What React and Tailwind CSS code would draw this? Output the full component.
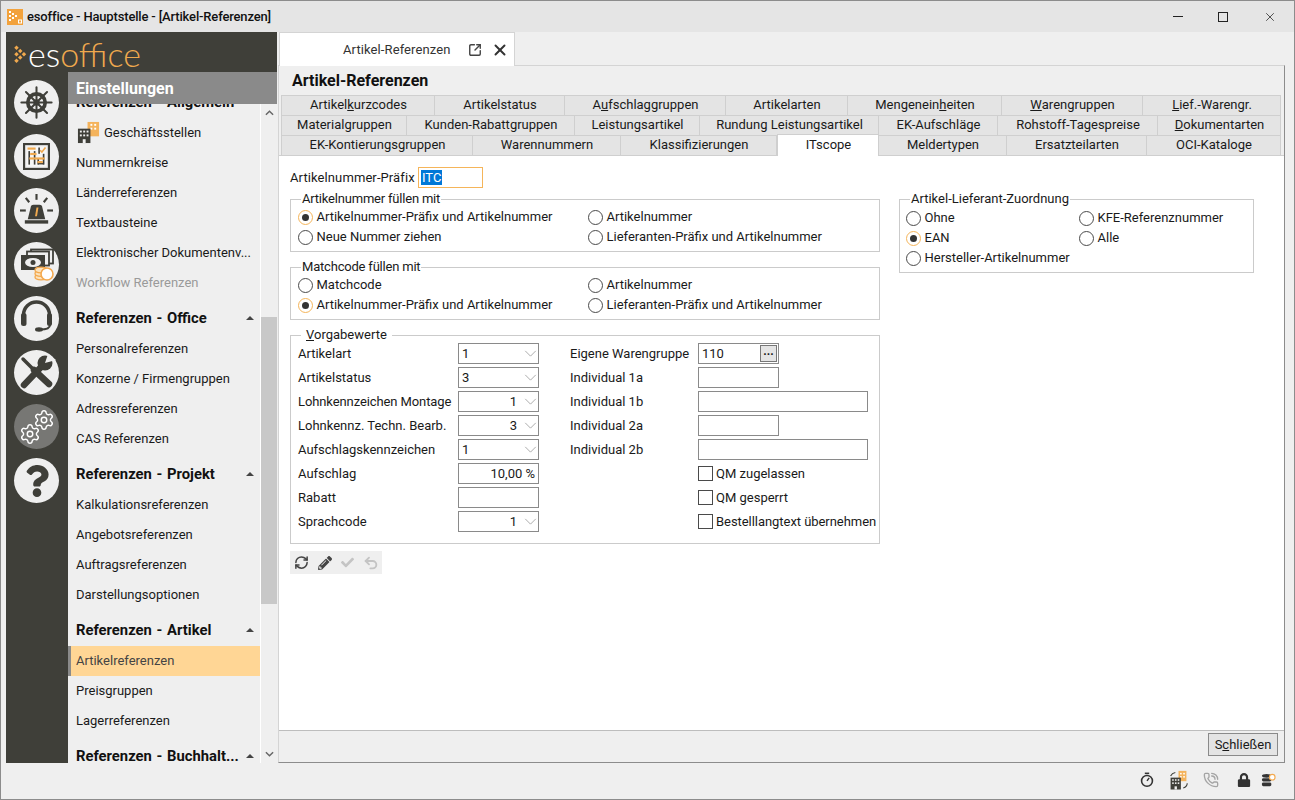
import React from "react";
import { X, Settings, RefreshCw, Undo2, PhoneCall, SquareArrowOutUpRight } from "lucide-react";
import { FaQuestion, FaPencilAlt, FaCheck, FaLock } from "react-icons/fa";

const DARK = "#3f3f39";

const tabRows = [
  [
    { w: 154, label: <>Artikel<u>k</u>urzcodes</> },
    { w: 130, label: "Artikelstatus" },
    { w: 161, label: <>A<u>u</u>fschlaggruppen</> },
    { w: 122, label: "Artikelarten" },
    { w: 154, label: <>Mengenein<u>h</u>eiten</> },
    { w: 141, label: <><u>W</u>arengruppen</> },
    { w: 138, label: <><u>L</u>ief.-Warengr.</> },
  ],
  [
    { w: 126, label: "Materialgruppen" },
    { w: 168, label: "Kunden-Rabattgruppen" },
    { w: 125, label: "Leistungsartikel" },
    { w: 179, label: "Rundung Leistungsartikel" },
    { w: 119, label: "EK-Aufschläge" },
    { w: 160, label: "Rohstoff-Tagespreise" },
    { w: 123, label: <><u>D</u>okumentarten</> },
  ],
  [
    { w: 192, label: "EK-Kontierungsgruppen" },
    { w: 148, label: "Warennummern" },
    { w: 156, label: "Klassifizierungen" },
    { w: 102, label: "ITscope", active: true },
    { w: 128, label: "Meldertypen" },
    { w: 140, label: "Ersatzteilarten" },
    { w: 134, label: "OCI-Kataloge" },
  ],
];

const menu = [
  { head: "Referenzen - Allgemein" },
  { label: "Geschäftsstellen", icon: true },
  { label: "Nummernkreise" },
  { label: "Länderreferenzen" },
  { label: "Textbausteine" },
  { label: "Elektronischer Dokumentenv..." },
  { label: "Workflow Referenzen", disabled: true },
  { head: "Referenzen - Office" },
  { label: "Personalreferenzen" },
  { label: "Konzerne / Firmengruppen" },
  { label: "Adressreferenzen" },
  { label: "CAS Referenzen" },
  { head: "Referenzen - Projekt" },
  { label: "Kalkulationsreferenzen" },
  { label: "Angebotsreferenzen" },
  { label: "Auftragsreferenzen" },
  { label: "Darstellungsoptionen" },
  { head: "Referenzen - Artikel" },
  { label: "Artikelreferenzen", active: true },
  { label: "Preisgruppen" },
  { label: "Lagerreferenzen" },
  { head: "Referenzen - Buchhalt..." },
];

const BuildingIcon = ({ className }) => (
  <svg viewBox="0 0 24 24" className={className}>
    <rect x="11" y="1" width="12" height="15" fill="#f4b35c" />
    <g fill="#fff">
      <rect x="14" y="3" width="2" height="2" />
      <rect x="18" y="3" width="2" height="2" />
      <rect x="14" y="7" width="2" height="2" />
      <rect x="18" y="7" width="2" height="2" />
    </g>
    <rect x="1" y="8" width="13" height="15" fill={DARK} />
    <g fill="#efefef">
      <rect x="3" y="10" width="2" height="2" />
      <rect x="6.5" y="10" width="2" height="2" />
      <rect x="10" y="10" width="2" height="2" />
      <rect x="3" y="14" width="2" height="2" />
      <rect x="6.5" y="14" width="2" height="2" />
      <rect x="10" y="14" width="2" height="2" />
      <rect x="6" y="19" width="3" height="4" />
    </g>
  </svg>
);

// the status bar one has the little sync arrows round it
const SyncBuildingIcon = ({ className }) => (
  <svg viewBox="0 0 24 24" className={className}>
    <rect x="12" y="0.5" width="10" height="13" fill="#f4b35c" />
    <g fill="#fff">
      <rect x="14" y="3" width="2" height="2" />
      <rect x="18" y="3" width="2" height="2" />
      <rect x="14" y="7" width="2" height="2" />
      <rect x="18" y="7" width="2" height="2" />
    </g>
    <rect x="2" y="9" width="13" height="15" fill={DARK} />
    <g fill="#efefef">
      <rect x="4" y="11" width="2" height="2" />
      <rect x="7.5" y="11" width="2" height="2" />
      <rect x="11" y="11" width="2" height="2" />
      <rect x="4" y="15" width="2" height="2" />
      <rect x="7.5" y="15" width="2" height="2" />
      <rect x="11" y="15" width="2" height="2" />
      <rect x="7" y="20" width="3" height="4" />
    </g>
    <path d="M2 7c1-2 3-4 6-4.500" fill="none" stroke={DARK} strokeWidth="1.4" />
    <path d="M23 16c0 3-2 5-5 6" fill="none" stroke={DARK} strokeWidth="1.4" />
  </svg>
);

const WheelIcon = () => (
  <svg viewBox="0 0 36 36" className="w-[33px] h-[33px]">
    <circle cx="18" cy="18" r="9.5" fill="none" stroke={DARK} strokeWidth="4" />
    <circle cx="18" cy="18" r="3.5" fill={DARK} />
    <g stroke={DARK} strokeWidth="2.2" strokeLinecap="round">
      <line x1="18" y1="1.5" x2="18" y2="34.5" />
      <line x1="1.5" y1="18" x2="34.5" y2="18" />
      <line x1="6.5" y1="6.5" x2="29.5" y2="29.5" />
      <line x1="29.5" y1="6.5" x2="6.5" y2="29.5" />
    </g>
  </svg>
);

const BoardIcon = () => (
  <svg viewBox="0 0 30 30" className="w-[27px] h-[27px]">
    <rect x="1.2" y="1.2" width="27.600" height="27.600" fill="none" stroke={DARK} strokeWidth="2.4" />
    <rect x="4" y="4" width="22" height="22" fill="#f7f7f7" />
    <g fill={DARK}>
      <rect x="6" y="9" width="1.800" height="15" />
      <rect x="12" y="9" width="1.800" height="15" />
      <rect x="17" y="5" width="1.800" height="7" />
      <rect x="22" y="12" width="1.800" height="12" />
      <rect x="16" y="17" width="1.800" height="7" />
      <rect x="17" y="22" width="6" height="1.800" />
    </g>
    <g fill="#f0a94e">
      <rect x="5" y="5" width="9" height="2.400" />
      <rect x="8" y="11" width="7" height="2.400" />
      <rect x="7" y="16" width="17" height="2.400" />
      <rect x="16" y="20" width="6" height="2.400" />
    </g>
    <path d="M19 8l2 2 4-5" fill="none" stroke="#f0a94e" strokeWidth="1.800" />
  </svg>
);

const SirenIcon = () => (
  <svg viewBox="0 0 36 36" className="w-[35px] h-[35px]">
    <path d="M12 15q0-3 3-3h6q3 0 3 3l3 12H9z" fill={DARK} />
    <rect x="6" y="28" width="24" height="3.500" fill={DARK} />
    <path d="M18 15h2l-1.500 9h-2z" fill="#f0a94e" />
    <g stroke={DARK} strokeWidth="2.200">
      <line x1="18" y1="1" x2="18" y2="7" />
      <line x1="7" y1="5" x2="10.500" y2="9.500" />
      <line x1="29" y1="5" x2="25.500" y2="9.500" />
      <line x1="1" y1="18" x2="7" y2="18" />
      <line x1="29" y1="18" x2="35" y2="18" />
    </g>
  </svg>
);

const MoneyIcon = () => (
  <svg viewBox="0 0 45 45" className="w-[45px] h-[45px]">
    <rect x="17" y="7.500" width="22" height="14" fill="#efefef" stroke={DARK} strokeWidth="1.800" />
    <rect x="13" y="9.500" width="22" height="14" fill="#efefef" stroke={DARK} strokeWidth="1.800" />
    <rect x="7" y="13" width="24" height="15" fill={DARK} />
    <ellipse cx="19" cy="20.500" rx="8" ry="4.500" fill="#efefef" />
    <circle cx="19" cy="20.500" r="2.500" fill={DARK} />
    <g fill="#fbe3bd" stroke="#f4a94e" strokeWidth="1.300">
      <ellipse cx="27" cy="35" rx="6" ry="2.800" />
      <ellipse cx="27" cy="31.500" rx="6" ry="2.800" />
      <ellipse cx="27" cy="28" rx="6" ry="2.800" />
      <circle cx="33" cy="32" r="6" fill="#fff" strokeWidth="1.600" />
    </g>
  </svg>
);

const HeadsetIcon = () => (
  <svg viewBox="0 0 45 45" className="w-[45px] h-[45px]">
    <path d="M9.500 24v-5a13 13 0 0 1 26 0v5" fill="none" stroke={DARK} strokeWidth="3.500" />
    <rect x="7" y="17" width="5.500" height="13" rx="2.500" fill={DARK} />
    <rect x="33" y="17" width="5" height="13" rx="2.500" fill={DARK} />
    <path d="M36 29c0 3-4 4.500-10 4.500" fill="none" stroke={DARK} strokeWidth="2" />
    <ellipse cx="25" cy="33.500" rx="4" ry="2.200" fill={DARK} />
  </svg>
);

const ToolsIcon = () => (
  <svg viewBox="0 0 45 45" className="w-[45px] h-[45px]">
    <g stroke={DARK} strokeLinecap="round">
      <line x1="9" y1="9" x2="20" y2="20" strokeWidth="3.500" />
      <line x1="20" y1="20" x2="35" y2="34" strokeWidth="6.500" />
      <line x1="10" y1="35" x2="29" y2="15" strokeWidth="6.500" />
    </g>
    <circle cx="31" cy="13" r="7.500" fill={DARK} />
    <path d="M31 13l3-9 8 6z" fill="#efefef" />
  </svg>
);

const railIcons = [
  <WheelIcon />,
  <BoardIcon />,
  <SirenIcon />,
  <MoneyIcon />,
  <HeadsetIcon />,
  <ToolsIcon />,
  <div className="relative w-[36px] h-[36px]">
    <Settings size={22} color="#fff" strokeWidth={1.6} className="absolute right-0 top-0" />
    <Settings size={22} color="#fff" strokeWidth={1.6} className="absolute left-0 bottom-0" />
  </div>,
  <FaQuestion size={32} color={DARK} />,
];

const Triangle = () => (
  <span className="w-0 h-0 border-x-[4px] border-x-transparent border-b-[4px] border-b-[#444] shrink-0" />
);

const Chevron = () => (
  <svg viewBox="0 0 14 8" className="w-[13px] h-[7px] shrink-0">
    <polyline points="1,1 7,7 13,1" fill="none" stroke="#a0a0a0" strokeWidth="1" />
  </svg>
);

const Radio = ({ label, checked }) => (
  <div className="flex items-center h-[20px] gap-[3.5px]">
    <span
      className={`w-[15px] h-[15px] rounded-full border bg-white flex items-center justify-center shrink-0 ${
        checked ? "border-[#f5b55a]" : "border-[#4a4a4a]"
      }`}
    >
      {checked && <span className="w-[7px] h-[7px] rounded-full bg-[#333]" />}
    </span>
    <span className="whitespace-nowrap">{label}</span>
  </div>
);

const Group = ({ legend, className, children }) => (
  <div className={`relative border border-[#cbcbcb] ${className}`}>
    <span className="absolute left-[10px] -top-[9px] bg-white px-[1px] leading-[16px] whitespace-nowrap">
      {legend}
    </span>
    {children}
  </div>
);

const Field = ({ value = "", w = "w-[81px]", right, select, center }) => (
  <div className={`${w} h-[21px] border border-[#8a8a8a] bg-white flex items-center pl-[3px] pr-[1px]`}>
    <span className={`flex-1 ${right ? "text-right pr-[2px]" : ""} ${center ? "text-right pr-[7px]" : ""}`}>{value}</span>
    {select && <Chevron />}
  </div>
);

const Row = ({ label, children }) => (
  <div className="flex items-center h-[21px]">
    <span className="w-[160px] whitespace-nowrap">{label}</span>
    {children}
  </div>
);

const Check = ({ label }) => (
  <div className="flex items-center h-[21px] ml-[128px] gap-[3px]">
    <span className="w-[15px] h-[15px] border border-[#4a4a4a] bg-white shrink-0" />
    <span className="whitespace-nowrap">{label}</span>
  </div>
);

const Sidebar = () => (
  <div className="w-[271px] flex flex-col" style={{ backgroundColor: DARK }}>
    {/* Logo */}
    <div className="h-[40px] flex items-center pl-[8px] gap-[1px]">
      <svg viewBox="0 0 14 20" className="w-[13px] h-[19px] mt-[4px]">
        <g fill="#f0a94e">
          <rect x="1" y="1" width="3.400" height="3.400" transform="rotate(45 2.700 2.700)" />
          <rect x="1" y="8" width="3.400" height="3.400" transform="rotate(45 2.700 9.700)" />
          <rect x="1" y="15" width="3.400" height="3.400" transform="rotate(45 2.700 16.700)" />
          <rect x="5" y="4.500" width="3.400" height="3.400" transform="rotate(45 6.700 6.200)" />
          <rect x="5" y="11.500" width="3.400" height="3.400" transform="rotate(45 6.700 13.200)" />
          <rect x="9" y="8" width="3.400" height="3.400" transform="rotate(45 10.700 9.700)" />
        </g>
      </svg>
      <span className="text-[34px] leading-[40px] font-light mt-[3px] text-white font-[Lato,sans-serif]">
        es<span className="text-[#f0a94e]">office</span>
      </span>
    </div>

    <div className="flex flex-1 min-h-0">
      {/* Icon rail */}
      <div className="w-[62px] flex flex-col items-center gap-[9px] pt-[8px] shrink-0 pr-[1px]">
        {railIcons.map((icon, i) => (
          <div
            key={i}
            className={`w-[45px] h-[45px] rounded-full flex items-center justify-center ${
              i === 6 ? "bg-[#777774]" : "bg-[#efefef]"
            }`}
          >
            {icon}
          </div>
        ))}
      </div>

      {/* Menu */}
      <div className="flex-1 flex flex-col min-w-0">
        <div className="h-[32px] bg-[#8a8a8a] text-white font-bold text-[16px] flex items-center pl-[8px] pt-[2px] shrink-0">
          Einstellungen
        </div>
        <div className="flex flex-1 min-h-0 bg-[#efefef]">
          <div className="w-[192px] overflow-hidden shrink-0">
            <div className="-mt-[22px]">
              {menu.map((m, i) =>
                m.head ? (
                  <div key={i} className="h-[36px] pt-[11px] pl-[8px] pr-[6px] flex justify-between text-[14.8px] [word-spacing:1px] font-bold text-[#111] leading-[18px]">
                    <span className="whitespace-nowrap">{m.head}</span>
                    <span className="flex items-center h-[18px]"><Triangle /></span>
                  </div>
                ) : (
                  <div
                    key={i}
                    className={`h-[30px] flex items-center whitespace-nowrap ${
                      m.active ? "bg-[#ffd695] border-l-[3px] border-[#8a8a8a] pl-[5px] text-[#444]" : "pl-[8px]"
                    } ${m.disabled ? "text-[#9a9a9a]" : ""}`}
                  >
                    {m.icon && <BuildingIcon className="w-[23px] h-[23px] mr-[4px] -mt-[1px] ml-[1px]" />}
                    {m.label}
                  </div>
                )
              )}
            </div>
          </div>
          {/* Scrollbar */}
          <div className="flex-1 border-l border-white flex flex-col items-center">
            <svg viewBox="0 0 10 6" className="w-[9px] h-[6px] mt-[6px] shrink-0">
              <polyline points="1,5 5,1 9,5" fill="none" stroke="#666" strokeWidth="1.600" />
            </svg>
            <div className="h-[201px] shrink-0" />
            <div className="w-full h-[287px] bg-[#c8c8c8] shrink-0" />
            <div className="flex-1" />
            <svg viewBox="0 0 10 6" className="w-[9px] h-[6px] mb-[6px] shrink-0">
              <polyline points="1,1 5,5 9,1" fill="none" stroke="#666" strokeWidth="1.600" />
            </svg>
          </div>
        </div>
      </div>
    </div>
  </div>
);

const TabRow = ({ tabs }) => (
  <div className="flex h-[20px] items-start">
    {tabs.map((t, i) => (
      <div
        key={i}
        style={{ width: t.w }}
        className={`flex items-center justify-center whitespace-nowrap border-t border-r border-[#cfcfcf] pl-[1px] ${i === 0 ? "border-l" : ""} ${
          t.active ? "bg-white h-[22px] -mt-[1px] relative z-10 border-l pb-[2px]" : "bg-[#e4e4e4] h-[20px] pb-[1px]"
        }`}
      >
        {t.label}
      </div>
    ))}
  </div>
);

const ArticleForm = () => (
  <div className="flex-1 bg-white border-t border-[#cfcfcf] flex pl-[11px] pt-[11px] gap-[19px] min-h-0">
    <div className="w-[590px] shrink-0">
      <div className="flex items-center h-[21px]">
        <span className="w-[128px] whitespace-nowrap tracking-[0.1px]">Artikelnummer-Präfix</span>
        <div className="w-[65px] h-[21px] border border-[#f5b55a] flex items-center pl-[2px]">
          <span className="bg-[#0078d7] text-white leading-[15px] px-[1px]">ITC</span>
        </div>
      </div>

      <Group legend={<span className="tracking-[-0.2px]">Artikelnummer füllen mit</span>} className="mt-[11px] h-[53px] pt-[7px] pl-[7px]">
        <div className="grid grid-cols-[290px_1fr]">
          <Radio label="Artikelnummer-Präfix und Artikelnummer" checked />
          <Radio label="Artikelnummer" />
          <Radio label="Neue Nummer ziehen" />
          <Radio label="Lieferanten-Präfix und Artikelnummer" />
        </div>
      </Group>

      <Group legend={<span className="tracking-[-0.2px]">Matchcode füllen mit</span>} className="mt-[15px] h-[53px] pt-[7px] pl-[7px]">
        <div className="grid grid-cols-[290px_1fr]">
          <Radio label="Matchcode" />
          <Radio label="Artikelnummer" />
          <Radio label="Artikelnummer-Präfix und Artikelnummer" checked />
          <Radio label="Lieferanten-Präfix und Artikelnummer" />
        </div>
      </Group>

      <Group legend={<span className="px-[4px]"><u>V</u>orgabewerte</span>} className="mt-[15px] h-[209px] pt-[7px] pl-[7px] flex gap-[31px]">
        <div className="flex flex-col gap-[3px] w-[241px] shrink-0">
          <Row label="Artikelart"><Field value="1" select /></Row>
          <Row label="Artikelstatus"><Field value="3" select /></Row>
          <Row label={<span className="tracking-[-0.1px]">Lohnkennzeichen Montage</span>}><Field value="1" select center /></Row>
          <Row label="Lohnkennz. Techn. Bearb."><Field value="3" select center /></Row>
          <Row label="Aufschlagskennzeichen"><Field value="1" select /></Row>
          <Row label="Aufschlag"><Field value="10,00 %" right /></Row>
          <Row label="Rabatt"><Field /></Row>
          <Row label="Sprachcode"><Field value="1" select center /></Row>
        </div>
        <div className="flex flex-col gap-[3px]">
          <div className="flex items-center h-[21px]">
            <span className="w-[128px] whitespace-nowrap">Eigene Warengruppe</span>
            <div className="w-[81px] h-[21px] border border-[#8a8a8a] flex items-center pl-[3px] pr-[1px]">
              <span className="flex-1">110</span>
              <span className="w-[17px] h-[17px] border border-[#777] bg-[#e4e4e4] flex items-center justify-center font-bold leading-none text-[12px] pb-[5px]">...</span>
            </div>
          </div>
          <div className="flex items-center h-[21px]"><span className="w-[128px]">Individual 1a</span><Field /></div>
          <div className="flex items-center h-[21px]"><span className="w-[128px]">Individual 1b</span><Field w="w-[170px]" /></div>
          <div className="flex items-center h-[21px]"><span className="w-[128px]">Individual 2a</span><Field /></div>
          <div className="flex items-center h-[21px]"><span className="w-[128px]">Individual 2b</span><Field w="w-[170px]" /></div>
          <Check label="QM zugelassen" />
          <Check label="QM gesperrt" />
          <Check label={<span className="tracking-[-0.05px]">Bestelllangtext übernehmen</span>} />
        </div>
      </Group>

      {/* Toolbar */}
      <div className="mt-[7px] w-[92px] h-[23px] bg-[#efefef] flex items-center gap-[9px] pl-[4px]">
        <RefreshCw size={15} color="#444" strokeWidth={2.4} />
        <FaPencilAlt size={14} color="#444" />
        <FaCheck size={13} color="#c4c4c4" />
        <Undo2 size={16} color="#c4c4c4" strokeWidth={2.8} />
      </div>
    </div>

    <Group legend="Artikel-Lieferant-Zuordnung" className="mt-[32px] w-[355px] h-[74px] pt-[8px] pl-[6px] self-start">
      <div className="grid grid-cols-[173px_1fr]">
        <Radio label="Ohne" />
        <Radio label="KFE-Referenznummer" />
        <Radio label="EAN" checked />
        <Radio label="Alle" />
        <Radio label="Hersteller-Artikelnummer" />
      </div>
    </Group>
  </div>
);

const StatusBar = () => (
  <div className="flex-1 flex items-center justify-end pr-[18px] pb-[2px]">
    <svg viewBox="0 0 16 18" className="w-[14px] h-[16px]">
      <circle cx="8" cy="10" r="6.200" fill="none" stroke="#333" strokeWidth="1.800" />
      <rect x="5.500" y="0.500" width="5" height="1.800" fill="#333" />
      <line x1="8" y1="10" x2="10.500" y2="6.500" stroke="#333" strokeWidth="1.600" />
    </svg>
    <SyncBuildingIcon className="w-[19px] h-[20px] ml-[15px]" />
    <PhoneCall size={16} color="#a4a4a4" strokeWidth={2} className="ml-[15px]" />
    <FaLock size={14} color="#333" className="ml-[18px]" />
    <svg viewBox="0 0 16 16" className="w-[15px] h-[15px] ml-[10px]">
      <g fill="#333">
        <ellipse cx="6" cy="3" rx="5" ry="2" />
        <rect x="1" y="5.500" width="10" height="3.500" rx="1.500" />
        <rect x="1" y="10" width="10" height="4" rx="1.500" />
      </g>
      <circle cx="12" cy="4.500" r="3" fill="#fff" stroke="#f4a94e" strokeWidth="1.200" />
    </svg>
  </div>
);

const App = () => {
  return (
    <div className="w-[1295px] h-[800px] flex flex-col border border-[#8c8c8c] bg-[#efefef] text-[13px] text-[#1a1a1a] font-[Roboto,sans-serif] overflow-hidden">
      {/* Title bar */}
      <div className="h-[31px] bg-[#e5e5e5] flex items-center shrink-0 pl-[6px]">
        <svg viewBox="0 0 16 16" className="w-[16px] h-[16px]">
          <rect width="16" height="16" fill="#f2a23c" />
          <g fill="#fff">
            <rect x="2" y="2" width="2" height="2" />
            <rect x="2" y="6" width="2" height="2" />
            <rect x="2" y="10" width="2" height="2" />
            <rect x="5" y="4" width="2" height="2" />
            <rect x="5" y="8" width="2" height="2" />
            <rect x="8" y="6" width="2" height="2" />
          </g>
          <rect x="11.500" y="11" width="3" height="3" fill="none" stroke="#fff" />
        </svg>
        <span className="ml-[4px] font-medium text-[#111] tracking-[-0.16px]">esoffice - Hauptstelle - [Artikel-Referenzen]</span>
        <div className="ml-auto flex items-center text-[#222] pr-[17px]">
          <span className="w-[10px] border-t border-[#222]" />
          <span className="w-[10px] h-[10px] border border-[#222] ml-[35px]" />
          <X size={14} strokeWidth={1.3} className="ml-[35px]" />
        </div>
      </div>

      <div className="flex h-[731px] pl-[5px] shrink-0">
        <Sidebar />

        {/* Main content */}
        <div className="w-[1007px] ml-[1px] flex flex-col">
          <div className="h-[33px] flex shrink-0">
            <div className="ml-[1px] w-[236px] h-[34px] bg-white border border-b-0 border-[#d4d4d4] flex items-center pl-[63px] relative z-10 text-[#333]">
              <span className="whitespace-nowrap tracking-[0.1px]">Artikel-Referenzen</span>
              <SquareArrowOutUpRight size={14} color="#444" strokeWidth={2.4} className="ml-[18px]" />
              <X size={18} color="#333" strokeWidth={2.6} className="ml-[9px]" />
            </div>
          </div>
          <div className="flex-1 min-h-0 flex flex-col border-t border-l border-t-[#d4d4d4] border-l-[#d4d4d4] border-r border-b border-r-[#8c8c8c] border-b-[#8c8c8c]">
            <div className="h-[29px] pl-[13px] flex items-center font-bold text-[16px] text-[#111] shrink-0">Artikel-Referenzen</div>
            <div className="pl-[2px] shrink-0">
              {tabRows.map((tabs, i) => (
                <TabRow key={i} tabs={tabs} />
              ))}
            </div>
            <ArticleForm />
            <div className="h-[32px] border-t border-[#bdbdbd] flex justify-end pt-[2px] pr-[6px] shrink-0">
              <button className="w-[70px] h-[23px] border border-[#8a8a8a] bg-[#e4e4e4]">
                S<u>c</u>hließen
              </button>
            </div>
          </div>
        </div>
      </div>

      <StatusBar />
    </div>
  );
};

export default App;
